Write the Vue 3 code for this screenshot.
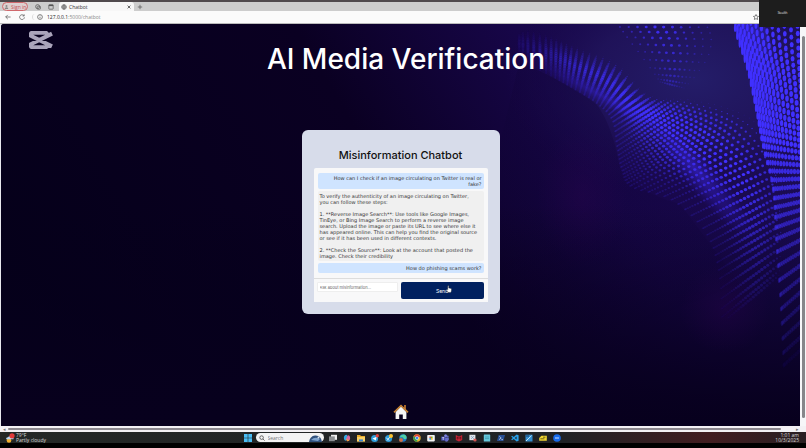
<script setup>
import { ref } from 'vue'

const draft = ref('')
const messages = [
  { from: 'user', text: 'How can I check if an image circulating on Twitter is real or\nfake?' },
  {
    from: 'bot',
    text:
      'To verify the authenticity of an image circulating on Twitter,\nyou can follow these steps:\n\n' +
      '1. **Reverse Image Search**: Use tools like Google Images,\nTinEye, or Bing Image Search to perform a reverse image\nsearch. Upload the image or paste its URL to see where else it\nhas appeared online. This can help you find the original source\nor see if it has been used in different contexts.\n\n' +
      '2. **Check the Source**: Look at the account that posted the\nimage. Check their credibility',
  },
  { from: 'user', text: 'How do phishing scams work?' },
]

// Dotted waves: each one is a grid of dots stretched between two smooth curves.
const spline = (pts, t) => {
  const last = pts.length - 1
  const i = Math.min(last - 1, Math.floor(t * last))
  const f = t * last - i
  const at = (n) => pts[Math.max(0, Math.min(last, n))]
  return [0, 1].map((k) => {
    const [a, b, c, d] = [at(i - 1)[k], at(i)[k], at(i + 1)[k], at(i + 2)[k]]
    return 0.5 * (2 * b + (c - a) * f + (2 * a - 5 * b + 4 * c - d) * f * f + (3 * b - a - 3 * c + d) * f * f * f)
  })
}
const clamp = (n) => Math.max(0, Math.min(1, n))
const bump = (x, centre, width) => Math.exp(-(((x - centre) / width) ** 2))

function wave(a, b, nu, nv, power, look) {
  const dots = []
  for (let i = 0; i <= nu; i++) {
    const u = i / nu
    const p = spline(a, u)
    const q = spline(b, u)
    for (let j = 0; j <= nv; j++) {
      const w = Math.pow(j / nv, power)
      const d = look(u, w)
      const x = p[0] + (q[0] - p[0]) * w
      const y = p[1] + (q[1] - p[1]) * w
      if (d.o < 0.03 || y < -4 || x > 804) continue
      dots.push({ x: x.toFixed(1), y: y.toFixed(1), rx: d.rx.toFixed(2), ry: d.ry.toFixed(2), o: d.o.toFixed(2) })
    }
  }
  return dots
}

const rightWave = wave(
  [[712, -120], [720, -78], [727, -36], [735, 4], [747, 42], [756, 84], [763, 122], [773, 165], [776, 215], [781, 285], [784, 350]],
  [[812, -60], [812, -25], [812, 10], [812, 45], [812, 74], [812, 103], [812, 130], [812, 161], [812, 200], [812, 258], [812, 325]],
  50, 15, 1.3,
  (u, w) => ({
    rx: 1.2 + w * 1,
    ry: 2.6 + bump(u, 0.4, 0.16) * bump(w, 0.05, 0.45) * 2.2,
    o: clamp((1.0 - u) * 2.4),
  }),
)
const middleWave = wave(
  [[519, 36], [549, 51], [572, 64], [596, 79], [612, 96], [617, 123], [622, 146], [632, 163], [672, 176], [706, 209], [719, 249], [722, 299]],
  [[519, 3], [549, 11], [579, 24], [616, 39], [649, 71], [689, 76], [726, 84], [756, 99], [776, 129], [782, 169], [784, 209], [782, 249]],
  62, 26, 1.35,
  (u, w) => {
    const rim = clamp((1 - w) * 6 + 0.25)
    return {
      rx: (1 + 0.8 * bump(w, 0.55, 0.4)) * rim,
      ry: (0.8 + 0.8 * bump(w, 0.6, 0.4)) * rim,
      o: clamp(u * 2.2 + 0.08) * clamp((1.04 - u) * 3.4) * clamp(0.14 + 0.7 * bump(w, 0.48, 0.27) + (w > 0.5 ? 0.5 : 0) * clamp(u * 2)),
    }
  },
)
const topWave = wave(
  [[612, -12], [618, 0], [626, 12], [639, 29], [653, 48], [660, 58]],
  [[703, -12], [706, 0], [711, 14], [708, 32], [696, 51], [684, 64]],
  12, 10, 1,
  (u, w) => ({
    rx: (0.9 + bump(w, 0.45, 0.35) * 0.9) * (1 - u * 0.3),
    ry: (0.8 + bump(w, 0.45, 0.35) * 0.8) * (1 - u * 0.3),
    o: (0.35 + 0.6 * bump(w, 0.45, 0.35)) * clamp(1.2 - u * 0.8),
  }),
)
const dots = [...middleWave, ...topWave, ...rightWave]
</script>

<template>
  <div class="screen">
    <header class="tabs">
      <button class="signin">
        <svg viewBox="0 0 6 6"><circle cx="3" cy="1.7" r="1.2" /><path d="M.8 5.5Q.8 3.4 3 3.4T5.2 5.5Z" /></svg>
        Sign in
      </button>
      <button class="tool" aria-label="Workspaces">
        <svg viewBox="0 0 6 6"><circle cx="2.6" cy="2.6" r="2" /><rect x="2.2" y="2.2" width="3.2" height="3" rx=".6" /></svg>
      </button>
      <button class="tool" aria-label="Tab actions">
        <svg viewBox="0 0 6 6"><rect x=".8" y=".8" width="4.4" height="4.4" rx=".6" /><path d="M.8 1.4H5.2" stroke-width="1.4" /></svg>
      </button>
      <div class="tab">
        <svg viewBox="0 0 6 6"><circle cx="3" cy="3" r="2.3" /><path d="M.7 3H5.3M3 .7Q.8 3 3 5.3Q5.2 3 3 .7" /></svg>
        <span>Chatbot</span>
        <button aria-label="Close tab"><svg viewBox="0 0 6 6"><path d="M1.6 1.6L4.4 4.4M4.4 1.6L1.6 4.4" stroke-width=".9" /></svg></button>
      </div>
      <button class="tool plus" aria-label="New tab"><svg viewBox="0 0 6 6"><path d="M3 .8V5.2M.8 3H5.2" /></svg></button>
    </header>

    <nav class="address">
      <button class="tool" aria-label="Back"><svg viewBox="0 0 6 6"><path d="M5.6 3H.7M2.8 .9L.7 3L2.8 5.1" /></svg></button>
      <button class="tool" aria-label="Reload"><svg viewBox="0 0 6 6"><path d="M5 1.8A2.4 2.4 0 1 0 5.4 3.3M5.2 .4V2H3.6" /></svg></button>
      <div class="url">
        <svg viewBox="0 0 6 6"><circle cx="3" cy="3" r="2.4" /><path d="M3 2.7V4.3M3 1.5V2" /></svg>
        <span><b>127.0.0.1</b>:5000/chatbot</span>
        <svg class="star" viewBox="0 0 6 6"><path d="M3 .5L3.8 2.2L5.6 2.4L4.3 3.7L4.6 5.5L3 4.6L1.4 5.5L1.7 3.7L.4 2.4L2.2 2.2Z" /></svg>
      </div>
    </nav>

    <div class="viewport">
      <main class="page">
        <svg class="backdrop" viewBox="0 0 800 402" preserveAspectRatio="none" aria-hidden="true">
          <defs>
            <linearGradient id="base" x1="0" y1=".6" x2="1" y2=".3">
              <stop offset="0" stop-color="#05001a" /><stop offset=".5" stop-color="#0a0022" />
              <stop offset=".75" stop-color="#170648" /><stop offset="1" stop-color="#1c0d55" />
            </linearGradient>
            <radialGradient id="glow"><stop offset="0" stop-color="#241d69" /><stop offset=".55" stop-color="#21155c" stop-opacity=".8" /><stop offset="1" stop-color="#1a0a50" stop-opacity="0" /></radialGradient>
            <radialGradient id="plum"><stop offset="0" stop-color="#2b0450" stop-opacity=".35" /><stop offset="1" stop-color="#2b0450" stop-opacity="0" /></radialGradient>
            <radialGradient id="band"><stop offset="0" stop-color="#3420c0" stop-opacity=".75" /><stop offset="1" stop-color="#2a14a0" stop-opacity="0" /></radialGradient>
            <linearGradient id="floor" x1="0" y1="0" x2="0" y2="1">
              <stop offset=".45" stop-color="#05001a" stop-opacity="0" /><stop offset=".92" stop-color="#07001d" stop-opacity=".9" /><stop offset="1" stop-color="#07001d" />
            </linearGradient>
            <linearGradient id="shade" x1="0" y1="0" x2="0" y2="1"><stop offset="0" stop-color="#12043a" stop-opacity=".4" /><stop offset="1" stop-color="#0c0230" stop-opacity="0" /></linearGradient>
            <linearGradient id="edge" x1="0" y1="0" x2="1" y2="0"><stop offset="0" stop-color="#3c2cf4" stop-opacity=".75" /><stop offset="1" stop-color="#3c2cf4" stop-opacity="0" /></linearGradient>
          </defs>
          <rect width="800" height="402" fill="url(#base)" />
          <ellipse cx="695" cy="55" rx="190" ry="120" fill="url(#glow)" />
          <path d="M519 38Q570 60 596 80Q612 100 620 145Q640 170 680 180L740 260L560 330L480 200Z" fill="url(#shade)" />
          <ellipse cx="582" cy="172" rx="45" ry="70" fill="url(#plum)" />
          <rect width="800" height="402" fill="url(#floor)" />
          <ellipse cx="695" cy="145" rx="90" ry="17" fill="url(#band)" transform="rotate(50 695 145)" />
          <ellipse cx="598" cy="70" rx="75" ry="9" fill="url(#band)" transform="rotate(28 598 70)" opacity=".7" />
          <ellipse cx="725" cy="285" rx="45" ry="45" fill="url(#plum)" />
          <path d="M734 0Q752 50 762 120L782 130Q790 60 764 0Z" fill="url(#edge)" />
          <g fill="#4030ff">
            <ellipse v-for="(d, i) in dots" :key="i" :cx="d.x" :cy="d.y" :rx="d.rx" :ry="d.ry" :opacity="d.o" />
          </g>
        </svg>

        <svg class="mark" viewBox="0 0 24 18" aria-hidden="true">
          <path d="M18 5.4V3.4Q18 1.8 16.4 1.8H3.4Q1.8 1.8 1.8 3.4V4.8L23 15.4M18 12.6V14.6Q18 16.2 16.4 16.2H3.4Q1.8 16.2 1.8 14.6V13.2L23 2.6" />
        </svg>

        <h1>AI Media Verification</h1>

        <section class="card">
          <h2>Misinformation Chatbot</h2>
          <div class="log">
            <p v-for="m in messages" :key="m.text" :class="['message', m.from]">{{ m.text }}</p>
          </div>
          <form class="composer" @submit.prevent="draft = ''">
            <input v-model="draft" type="text" aria-label="Message" placeholder="Ask about misinformation..." />
            <button type="submit">
              Send
              <svg class="pointer" viewBox="0 0 8 10" aria-hidden="true"><path d="M2.4 5.6V1.2Q2.4 .4 3 .4T3.7 1.2V3.6L6.6 4.2Q7.5 4.4 7.4 5.4L7 8.2L6.3 9.6H3.3L.7 6.6Q.4 5.7 1.3 5.6L2.4 6.4Z" /></svg>
            </button>
          </form>
        </section>

        <a class="home" href="#" aria-label="Home">
          <svg viewBox="0 0 16 16">
            <path d="M11 1H13V5H11Z" fill="#a5662c" />
            <path d="M2.6 8L8 2.6L13.4 8V15H9.8V10.4H6.2V15H2.6Z" fill="#f5f5f5" />
            <path d="M1 8.4L8 1.5L15 8.4" fill="none" stroke="#c98333" stroke-width="1.6" />
          </svg>
        </a>
      </main>
      <div class="vbar"><i></i></div>
    </div>
    <div class="hbar"><span>◂</span><i></i><span>▸</span></div>

    <footer class="taskbar">
      <div class="weather">
        <svg viewBox="0 0 10 10"><circle cx="4" cy="7.4" r="2.3" fill="#f4b12e" /><path d="M1 6.2Q1 4.2 3 4.3Q4 2.4 6 3.6Q9 3.8 8.5 6.2Z" fill="#b9d7f4" /><circle cx="7" cy="2.8" r="2.6" fill="#e23b3b" /></svg>
        <p>79°F<br />Partly cloudy</p>
      </div>
      <div class="apps">
        <svg viewBox="0 0 8 8"><path d="M0 0H3.7V3.7H0ZM4.3 0H8V3.7H4.3ZM0 4.3H3.7V8H0ZM4.3 4.3H8V8H4.3Z" fill="#49bdf4" /></svg>
        <label class="search">
          <svg viewBox="0 0 6 6"><circle cx="2.6" cy="2.6" r="1.8" fill="none" stroke="#333" stroke-width=".7" /><path d="M4 4L5.6 5.6" stroke="#333" stroke-width=".7" /></svg>
          <input type="search" aria-label="Search" placeholder="Search" />
          <svg class="art" viewBox="0 0 13 8"><path d="M0 8Q1 2 6 1.5Q12 1 13 8Z" fill="#31527e" /><path d="M2 6Q6 2 11 5L9 7Z" fill="#7fa4cf" /><circle cx="9.5" cy="3.5" r="1" fill="#dde8f2" /></svg>
        </label>
        <svg viewBox="0 0 8 8"><rect x="2" y=".8" width="6" height="5" fill="#eee" /><rect x="0" y="2.4" width="5.8" height="4.8" fill="#8c8f92" /></svg>
        <svg viewBox="0 0 8 8"><path d="M1 5Q.2 1 3.8 .8L5 3L3.4 6.6Q1.4 7 1 5Z" fill="#32a7dd" /><path d="M7 3Q7.8 7 4.2 7.2L3 5L4.6 1.4Q6.6 1 7 3Z" fill="#d867a0" /><path d="M3 5L4.2 7.2Q6 7.2 6.5 6Z" fill="#f5a23c" /></svg>
        <svg viewBox="0 0 8 8"><path d="M0 1H3L4 2H8V7.4H0Z" fill="#e9ad2c" /><path d="M0 3H8V7.4H0Z" fill="#fbd266" /><path d="M2 5.4H6V7.4H2Z" fill="#3c86d4" /></svg>
        <svg viewBox="0 0 8 8"><circle cx="3.6" cy="4.4" r="3.5" fill="#2e9fdb" /><path d="M1.4 4.4L5.6 2.8L4.8 6.4Z" fill="#fff" /><circle cx="6.3" cy="1.8" r="1.7" fill="#e2403b" /></svg>
        <svg viewBox="0 0 8 8"><circle cx="3.6" cy="4.4" r="3.5" fill="#2898d8" /><path d="M1.2 3.6L4.2 6.6M4.8 3L2 6.6" stroke="#d9f3ff" /><circle cx="6" cy="2" r="2" fill="#fbc332" /></svg>
        <svg viewBox="0 0 8 8"><circle cx="4" cy="4" r="3.7" fill="#1878c8" /><path d="M.5 3.4Q2 0 5 .5Q8 1.4 7.6 4.5Q6 6 4.4 4.6Q5 2.8 .5 3.4Z" fill="#4fd0a4" /><circle cx="2" cy="6" r="2" fill="#ca7047" /></svg>
        <svg viewBox="0 0 8 8"><circle cx="4" cy="4" r="3.7" fill="#e4b92f" /><path d="M.8 2.2A3.7 3.7 0 0 1 7.5 2.7L4 4Z" fill="#df4335" /><path d="M.8 2.2A3.7 3.7 0 0 0 3.8 7.7L4.8 5L4 4Z" fill="#35a153" /><circle cx="4" cy="4" r="1.8" fill="#fff" /><circle cx="4" cy="4" r="1.3" fill="#4285f4" /></svg>
        <svg viewBox="0 0 8 8"><rect x=".2" y="1" width="7.6" height="6.4" rx=".8" fill="#f3f3f3" /><path d="M2.4 2.4H4V4H2.4Z" fill="#e5533d" /><path d="M4 2.4H5.6V4H4Z" fill="#78b52b" /><path d="M2.4 4H4V5.8H2.4Z" fill="#2b9de0" /><path d="M4 4H5.6V5.8H4Z" fill="#f5b921" /></svg>
        <svg viewBox="0 0 8 8"><circle cx="4.6" cy="1.8" r="1.5" fill="#7e83dd" /><circle cx="6.7" cy="2.4" r="1" fill="#6065c4" /><path d="M2.5 3.4H7.8V5.4Q7 8 4.5 7.6Z" fill="#666cc9" /><rect x=".2" y="2.6" width="4" height="4" fill="#484eb1" /><path d="M1.2 3.6H3.2M2.2 3.6V6" stroke="#fff" stroke-width=".6" /></svg>
        <svg viewBox="0 0 8 8"><path d="M.8 1L4 2.6L7.2 1V6L4 7.6L.8 6Z" fill="#c52233" /><path d="M2.3 5.4V3L4 4.4L5.7 3V5.4" fill="none" stroke="#590e18" stroke-width=".8" /></svg>
        <svg viewBox="0 0 8 8"><rect x=".4" y=".8" width="6" height="5.4" fill="#e0e4e9" /><path d="M2 2L5 5M5 2L2 5" stroke="#7899c0" stroke-width=".7" /><circle cx="6" cy="6" r="1.6" fill="#d65652" /></svg>
        <svg viewBox="0 0 8 8"><rect x=".8" y=".6" width="6.4" height="7" rx=".4" fill="#67c8dc" /><path d="M2 3H6M2 4.6H6" stroke="#2a829b" stroke-width=".5" /></svg>
        <svg viewBox="0 0 8 8"><path d="M1.6 1H8L6.4 7H0Z" fill="#284f94" /><path d="M2.4 2.4L4.2 4L2 5.6M4.4 5.6H6" fill="none" stroke="#d9e4f5" stroke-width=".7" /></svg>
        <svg viewBox="0 0 8 8"><path d="M5.6 .4L7.6 1.3V6.7L5.6 7.6L2.8 4.9L1 6.2L.2 5.6L1.8 4L.2 2.4L1 1.8L2.8 3.1ZM5.6 2.4L3.8 4L5.6 5.6Z" fill="#28a0ea" /></svg>
        <svg viewBox="0 0 8 8"><rect x=".5" y=".7" width="7" height="6.8" fill="#328dd0" /><path d="M1 7L6.6 1.6" stroke="#c7e8f9" /><path d="M1 2H4" stroke="#173d69" /></svg>
        <svg viewBox="0 0 8 8"><path d="M.2 4L2.4 1.8H7.8V6.8H.2Z" fill="#efd532" /><path d="M1.4 4.8H5.4M4 3.2H6.4" stroke="#504812" stroke-width=".8" /></svg>
        <svg viewBox="0 0 8 8"><circle cx="4" cy="4" r="3.8" fill="#176bec" /><path d="M2 4H6" stroke="#bdd8ff" stroke-width="1.1" /></svg>
      </div>
      <p class="clock">1:01 am<br />10/3/2025</p>
    </footer>

    <aside class="recorder">Stealth</aside>
  </div>
</template>

<style>
body { margin: 0; background: #000; }
</style>

<style scoped>
.screen { position: relative; display: flex; flex-direction: column; height: 100vh; overflow: hidden; background: #000; font-family: "Open Sans", "Liberation Sans", sans-serif; font-size: 5px; line-height: 6px; }
p, h1, h2 { margin: 0; font-weight: 400; }
button, input { margin: 0; padding: 0; border: 0; background: none; font: inherit; color: inherit; }
input { min-width: 0; outline: 0; }
svg { flex: none; display: block; }

.tabs { display: flex; align-items: center; height: 9px; padding-left: 2px; border-top: 2px solid #504a4d; background: #cdcdcd; gap: 7px; }
.tabs svg, .address svg { width: 6px; height: 6px; fill: none; stroke: #555; stroke-width: .7; }
.tabs .signin { display: flex; align-items: center; gap: 2px; width: 26px; height: 9px; padding-left: 1px; box-sizing: border-box; border: 1px solid #d0696d; border-radius: 5px; color: #c75056; background: #ddd0d0; white-space: nowrap; }
.tabs .signin svg { width: 5px; fill: #888; stroke: none; }
.tool + .tab { margin-left: -2px; }
.tab { display: flex; align-items: center; gap: 2px; width: 75px; height: 9px; padding: 0 2px 0 2px; box-sizing: border-box; border-radius: 3px 3px 0 0; background: #f7f7f7; color: #333; }
.tab button { margin-left: auto; }
.plus { margin-left: -4px; }

.address { display: flex; align-items: center; gap: 8px; height: 12px; padding-left: 5px; background: #fbfbfb; border-bottom: 1px solid #bbb; }
.url { display: flex; flex: 1; align-items: center; gap: 4px; padding: 0 47px 0 4px; border-left: 1px solid #ddd; border-radius: 5px; color: #888; margin-left: -1px; }
.url b { font-weight: 400; color: #222; }
.star { margin-left: auto; }

.viewport { display: flex; flex: 1; min-height: 0; background: #e8e8ee; padding-left: 1px; }
.page { position: relative; display: flex; flex: 1; flex-direction: column; align-items: center; min-width: 0; overflow: hidden; border-radius: 3px 0 0 0; background: #07001c; font-family: Inter, "Liberation Sans", sans-serif; }
.backdrop { position: absolute; inset: 0; width: 100%; height: 100%; }
.mark { position: absolute; left: 28px; top: 7px; width: 24px; height: 18px; fill: none; stroke: #aaa4ba; stroke-width: 4; stroke-linejoin: round; }
h1 { position: relative; padding: 17px 0 0 11px; color: #fff; font-size: 28px; font-weight: 500; line-height: 36px; }
.card { position: relative; width: 198px; margin-top: 53px; padding: 18px 12px 12px; box-sizing: border-box; border-radius: 6px; background: #d7dcea; color: #333; }
h2 { padding-bottom: 6px; color: #111; font-size: 11px; line-height: 14px; font-weight: 500; text-align: center; }
.log { display: flex; flex-direction: column; gap: 2px; padding: 5px 4px; border-bottom: 1px solid #ddd; border-radius: 2px 2px 0 0; background: #f8f8f9; font-family: "DejaVu Sans", sans-serif; }
.message { padding: 2px; border-radius: 2px; background: #f0f0f0; white-space: pre; }
.user { background: #cfe4ff; text-align: right; }
.composer { display: flex; align-items: flex-start; gap: 3px; padding: 3px 4px 3px 3px; background: #f8f8f9; }
.composer input { flex: 1; height: 10px; padding: 0 2px; border: 1px solid #eee; box-sizing: border-box; background: #fff; border-radius: 1px; font-size: 4px; }
.composer input::placeholder { color: #666; opacity: 1; }
.composer button { position: relative; width: 83px; height: 17px; border-radius: 2px; background: #00205f; color: #fff; }
.pointer { position: absolute; left: 45px; top: 3px; width: 6px; height: 8px; fill: #fff; stroke: #222; stroke-width: .5; }
.home { position: relative; margin: auto 0 6px; }
.home svg { width: 16px; height: 16px; }

.vbar { display: flex; width: 6px; padding: 12px 0 8px 1px; box-sizing: border-box; background: #f6f6f8; justify-content: center; }
.vbar i { width: 3px; border-radius: 2px; background: #86868a; }
.hbar { display: flex; align-items: center; height: 6px; padding: 0 7px 0 3px; gap: 2px; box-sizing: border-box; background: #f3f1f4; color: #777; line-height: 4px; }
.hbar i { flex: 1; height: 2px; margin-right: 13px; border-radius: 1px; background: #8b878d; }

.taskbar { display: flex; align-items: center; justify-content: space-between; height: 11px; margin-bottom: 5px; padding: 0 7px 0 5px; overflow: hidden; background: linear-gradient(90deg, #242826, #202225 70%, #421d20 88%, #292023); color: #d8d8d8; font-size: 5px; line-height: 5px; }
.weather { display: flex; flex: 1; gap: 1px; }
.weather svg { width: 10px; height: 10px; }
.apps { display: flex; align-items: center; gap: 6px; }
.apps > svg { width: 8px; height: 8px; }
.search { display: flex; align-items: center; gap: 3px; width: 68px; height: 9px; padding: 0 2px 0 3px; margin: 0 -1px 0 -2px; box-sizing: border-box; border-radius: 5px; background: #f3f3f3; }
.search svg { width: 6px; height: 6px; }
.search input { flex: 1; color: #444; }
.search input::placeholder { color: #777; opacity: 1; }
.search .art { width: 13px; height: 8px; }
.clock { flex: 1; text-align: right; }
.recorder { position: absolute; top: 0; right: 0; width: 47px; height: 27px; background: #1d1d1d; color: #eee; font-size: 3px; line-height: 27px; text-align: center; }
</style>
